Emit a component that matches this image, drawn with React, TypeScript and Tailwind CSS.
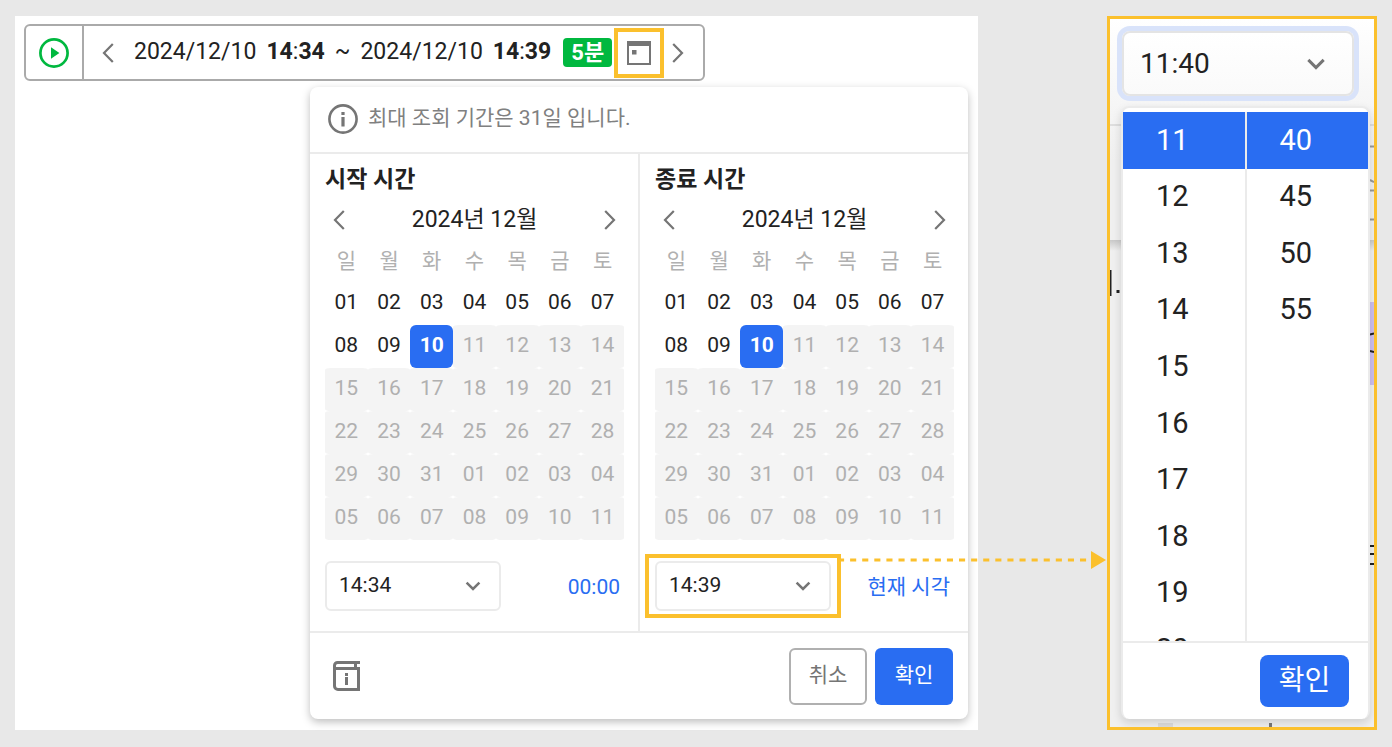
import React from "react";

const WEEKDAYS = ["일", "월", "화", "수", "목", "금", "토"];

type Day = { label: string; state: "open" | "selected" | "disabled" };

const WEEKS: Day[][] = Array.from({ length: 6 }, (_, week) =>
  Array.from({ length: 7 }, (_, weekday) => {
    const index = week * 7 + weekday + 1;
    const day = index > 31 ? index - 31 : index;
    return {
      label: String(day).padStart(2, "0"),
      state: index < 10 ? "open" : index === 10 ? "selected" : "disabled",
    };
  }),
);

const DAY_CLASS: Record<Day["state"], string> = {
  open: "text-[#222]",
  selected: "rounded-md bg-[#296df2] font-bold text-white",
  disabled: "rounded-[6px/2px] bg-[#f4f4f4] text-[#b0b0b0]",
};

const HOURS = ["11", "12", "13", "14", "15", "16", "17", "18", "19", "20"];
const MINUTES = ["40", "45", "50", "55"];

function Chevron({ direction }: { direction: "left" | "right" }) {
  return (
    <svg width="12" height="20" viewBox="0 0 12 20" fill="none" stroke="#757575" strokeWidth="2.2" aria-hidden="true">
      <path d={direction === "left" ? "M10.8 1 2 10l8.8 9" : "M1.2 1 10 10l-8.8 9"} />
    </svg>
  );
}

function DownIcon({ className }: { className: string }) {
  return (
    <svg className={className} viewBox="0 0 16 10" fill="none" stroke="#757575" strokeWidth="2.5" aria-hidden="true">
      <path d="m1.6 1.6 6.4 6.4 6.4-6.4" />
    </svg>
  );
}

function PlayIcon() {
  return (
    <svg width="30" height="30" viewBox="0 0 30 30" aria-hidden="true">
      <circle cx="15" cy="15" r="13.6" fill="none" stroke="#00b83f" strokeWidth="2.7" />
      <path d="M12 9.3v11.4l8.4-5.7z" fill="#00b83f" />
    </svg>
  );
}

function CalendarIcon() {
  return (
    <svg width="24" height="24" viewBox="0 0 24 24" aria-hidden="true">
      <rect x="1" y="1" width="22" height="22" fill="none" stroke="#757575" strokeWidth="2" />
      <path d="M0 0h24v5H0zM5 9h4.5v4.5H5z" fill="#757575" />
    </svg>
  );
}

function InfoIcon() {
  return (
    <svg width="30" height="30" viewBox="0 0 30 30" aria-hidden="true">
      <circle cx="15" cy="15" r="13.6" fill="none" stroke="#757575" strokeWidth="2.6" />
      <path d="M13.4 8h3.2v3h-3.2zM13.4 13h3.2v9.5h-3.2z" fill="#757575" />
    </svg>
  );
}

function GuideIcon() {
  return (
    <svg width="27" height="30" viewBox="0 0 27 30" aria-hidden="true">
      <path d="M27 1.500H4.500a3 3 0 0 0-3 3V25A3.500 3.500 0 0 0 5 28.500h20.500v-21H2M22.500 2v5" fill="none" stroke="#757575" strokeWidth="3" />
      <path d="M12 12h3v3h-3zM12 16h3v8h-3z" fill="#757575" />
    </svg>
  );
}

function TimeSelect({ label, value }: { label: string; value: string }) {
  return (
    <div className="relative w-44">
      <select
        aria-label={label}
        defaultValue={value}
        className="h-[50px] w-full appearance-none rounded-md border-2 border-[#ebebeb] bg-white pl-3 text-[21px] text-[#222]"
      >
        <option>{value}</option>
      </select>
      <DownIcon className="pointer-events-none absolute top-5 right-5 h-[10px] w-4" />
    </div>
  );
}

function MonthPanel({ title, children }: { title: string; children: React.ReactNode }) {
  return (
    <section className="min-w-0 flex-1 pt-[10px] pr-[14px] pb-5 pl-[15px]">
      <h2 className="text-[23px] leading-8 font-bold">{title}</h2>
      <div className="mt-[5px] mb-px flex h-[38px] items-center justify-between px-2">
        <button type="button" aria-label="이전 달">
          <Chevron direction="left" />
        </button>
        <span className="text-[23px]">2024년 12월</span>
        <button type="button" aria-label="다음 달">
          <Chevron direction="right" />
        </button>
      </div>
      <table className="w-full table-fixed border-collapse text-[21px] leading-6">
        <thead>
          <tr>
            {WEEKDAYS.map((name) => (
              <th key={name} scope="col" className="h-[42px] p-0 font-normal text-[#b0b0b0]">
                {name}
              </th>
            ))}
          </tr>
        </thead>
        <tbody>
          {WEEKS.map((week, row) => (
            <tr key={row}>
              {week.map((day) => (
                <td key={day.label} className="p-0">
                  <button
                    type="button"
                    disabled={day.state === "disabled"}
                    className={`block h-[43px] w-full pb-1 ${DAY_CLASS[day.state]}`}
                  >
                    {day.label}
                  </button>
                </td>
              ))}
            </tr>
          ))}
        </tbody>
      </table>
      <div className="mt-[21px] flex items-center justify-between pr-1">{children}</div>
    </section>
  );
}

function TimeColumn({ values, name }: { values: string[]; name: string }) {
  return (
    <ul aria-label={name} className="grid h-[566px] flex-1 grid-rows-10">
      {values.map((value, i) => (
        <li key={value}>
          <button
            type="button"
            className={`h-full w-full pl-[33px] text-left text-[29px] ${i === 0 ? "bg-[#296df2] text-white" : "text-[#222]"}`}
          >
            {value}
          </button>
        </li>
      ))}
    </ul>
  );
}

function Toolbar() {
  return (
    <div className="flex h-[57px] w-[681px] items-stretch rounded-md border-2 border-[#aaa] text-[23px]">
      <button type="button" aria-label="재생" className="flex w-[58px] items-center justify-center border-r-2 border-[#aaa]">
        <PlayIcon />
      </button>
      <div className="flex flex-1 items-center pl-[18px]">
        <button type="button" aria-label="이전 구간">
          <Chevron direction="left" />
        </button>
        <span className="ml-5 whitespace-nowrap">2024/12/10</span>
        <span className="ml-[10px] whitespace-nowrap">
          <b>14</b>:<b>34</b>
        </span>
        <span className="ml-[10px]">~</span>
        <span className="ml-[10px] whitespace-nowrap">2024/12/10</span>
        <span className="ml-[10px] whitespace-nowrap">
          <b>14</b>:<b>39</b>
        </span>
        <span className="ml-3 flex h-[29px] w-[49px] shrink-0 items-center justify-center rounded bg-[#00b83f] text-[22px] font-bold text-white">
          5분
        </span>
        <button
          type="button"
          aria-label="기간 선택"
          className="ml-[2px] flex size-[50px] shrink-0 items-center justify-center border-4 border-[#fbc02d]"
        >
          <CalendarIcon />
        </button>
        <button type="button" aria-label="다음 구간" className="ml-2">
          <Chevron direction="right" />
        </button>
      </div>
    </div>
  );
}

function RangePopover() {
  return (
    <div className="mt-[6px] ml-[286px] w-[658px] rounded-lg bg-white shadow-[0_3px_9px_rgba(0,0,0,0.26)]">
      <div className="flex h-[67px] items-center gap-[10px] border-b-2 border-[#ebebeb] pb-0.5 pl-[18px] text-[21px] text-[#808080]">
        <InfoIcon />
        <p>최대 조회 기간은 31일 입니다.</p>
      </div>
      <div className="flex">
        <MonthPanel title="시작 시간">
          <TimeSelect label="시작 시각" value="14:34" />
          <button type="button" className="pt-1 text-[21px] text-[#296df2]">
            00:00
          </button>
        </MonthPanel>
        <div className="w-[2px] bg-[#ebebeb]" />
        <MonthPanel title="종료 시간">
          <div className="relative">
            <TimeSelect label="종료 시각" value="14:39" />
            <div className="pointer-events-none absolute -inset-x-[10px] -inset-y-[7px] border-4 border-[#fbc02d]" />
            <svg
              className="pointer-events-none absolute -top-[10px] left-[186px] z-10 h-[18px] w-[266px]"
              viewBox="0 0 266 18"
              aria-hidden="true"
            >
              <path d="M-3 9h252" stroke="#fbc02d" strokeWidth="3" strokeDasharray="6.1 6" />
              <path d="M250 0v18l15-9z" fill="#fbc02d" />
            </svg>
          </div>
          <button type="button" className="pt-1 text-[21px] text-[#296df2]">
            현재 시각
          </button>
        </MonthPanel>
      </div>
      <div className="flex h-[88px] items-center border-t-2 border-[#ebebeb] pr-[15px] pl-[23px] text-[21px]">
        <button type="button" aria-label="도움말">
          <GuideIcon />
        </button>
        <button type="button" className="ml-auto h-[57px] w-[78px] rounded-md border-2 border-[#b0b0b0] text-[#757575]">
          취소
        </button>
        <button type="button" className="ml-2 h-[57px] w-[78px] rounded-md bg-[#296df2] text-white">
          확인
        </button>
      </div>
    </div>
  );
}

/* Slivers of the page that stay visible on either side of the open list. */
function PageBehind() {
  return (
    <svg className="absolute inset-0 h-[708px] w-[264px]" viewBox="0 0 264 708" aria-hidden="true">
      <defs>
        <linearGradient id="edge" x1="0" y1="0" x2="0" y2="1">
          <stop offset="0" stopColor="#c9c9c9" />
          <stop offset="1" stopColor="#f0f0f0" />
        </linearGradient>
      </defs>
      <path d="M0 106h264" stroke="#dedede" strokeWidth="2" />
      <path d="M0 221h264v11H0z" fill="url(#edge)" />
      <path d="M0 251h1.5v26H0zM6.5 271h3v3h-3z" fill="#222" />
      <path d="M260 127.5h4M260 171.5h4M260 200.5h4M260 161l4 2" stroke="#999" strokeWidth="2" />
      <path d="M260 283h4v83h-4z" fill="#cdbff0" />
      <path d="M260 315.5l4-1M260 332l4 1M260 527h4M260 535h4M260 545h4" stroke="#222" strokeWidth="2" />
      <path d="M48 704h15v4H48z" fill="#ddd" />
      <path d="M159 704h3v4h-3z" fill="#777" />
    </svg>
  );
}

function TimeDetail() {
  return (
    <aside className="relative h-[714px] w-[270px] shrink-0 overflow-hidden border-[3px] border-[#fbc02d] bg-linear-to-b from-white to-[#f0f0f0] to-20%">
      <PageBehind />
      <div className="relative pt-3 pl-[11px]">
        <div className="relative ml-px w-[232px]">
          <select
            aria-label="시각"
            defaultValue="11:40"
            className="h-[65px] w-full appearance-none rounded-lg border-2 border-[#e4e4e4] bg-linear-to-b from-white to-[#fafafa] pl-4 text-[28px] text-[#222] ring-[5px] ring-[#d9e3fa]"
          >
            <option>11:40</option>
          </select>
          <DownIcon className="pointer-events-none absolute top-[27px] right-7 h-3 w-5" />
        </div>
        <div className="mt-[10px] w-[249px] rounded-lg border-2 border-b-0 border-[#ebebeb] bg-white pt-1 shadow-[0_4px_10px_rgba(0,0,0,0.14)]">
          <div className="flex h-[529px] overflow-hidden">
            <TimeColumn values={HOURS} name="시" />
            <div className="w-[2px] shrink-0 bg-[#ebebeb]" />
            <TimeColumn values={MINUTES} name="분" />
          </div>
          <div className="flex h-[78px] items-center justify-end border-t-2 border-[#ebebeb] pr-[19px]">
            <button type="button" className="h-[52px] w-[89px] rounded-lg bg-[#296df2] text-[28px] text-white">
              확인
            </button>
          </div>
        </div>
      </div>
    </aside>
  );
}

export default function App() {
  return (
    <div className="flex min-h-screen items-start bg-[#e8e8e8] px-[15px] pt-4 pb-[17px] font-[Roboto,'Noto_Sans_CJK_KR',sans-serif] text-[#222]">
      <main className="min-w-0 flex-1 bg-white pt-2 pb-[11px] pl-[9px]">
        <Toolbar />
        <RangePopover />
      </main>
      <div className="w-[129px] shrink-0" />
      <TimeDetail />
    </div>
  );
}
